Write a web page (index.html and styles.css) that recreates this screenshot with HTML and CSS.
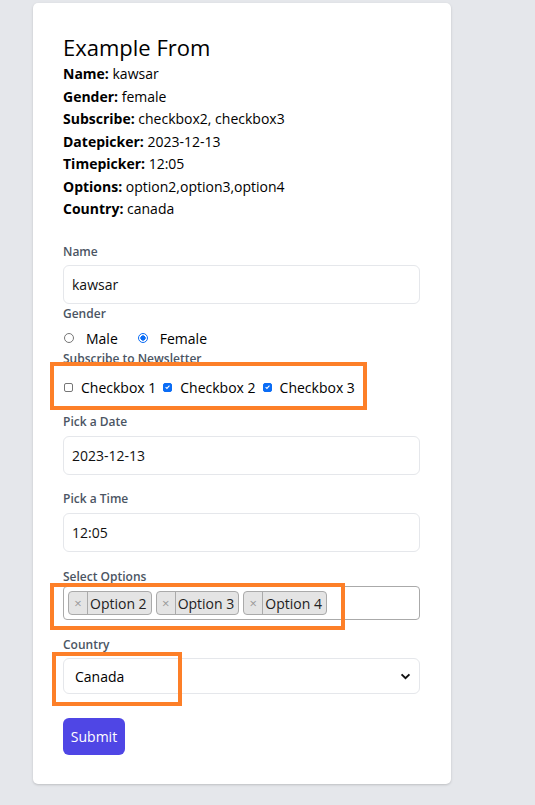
FILE: index.html
```html
<!DOCTYPE html>
<html lang="en">
<head>
<meta charset="utf-8">
<title>Example From</title>
<link rel="stylesheet" href="styles.css">
</head>
<body>
<div class="card">
  <h2 class="title">Example From</h2>
  <div class="summary">
    <p><strong>Name:</strong> kawsar</p>
    <p><strong>Gender:</strong> female</p>
    <p><strong>Subscribe:</strong> checkbox2, checkbox3</p>
    <p><strong>Datepicker:</strong> 2023-12-13</p>
    <p><strong>Timepicker:</strong> 12:05</p>
    <p><strong>Options:</strong> option2,option3,option4</p>
    <p><strong>Country:</strong> canada</p>
  </div>
  <form class="form">
    <label class="field-label lbl-name">Name</label>
    <input class="text-input in-name" type="text" value="kawsar">

    <label class="field-label lbl-gender">Gender</label>
    <div class="radio-row">
      <span class="radio"></span><span class="opt-text">Male</span>
      <span class="radio checked"></span><span class="opt-text">Female</span>
    </div>

    <label class="field-label lbl-sub">Subscribe to Newsletter</label>
    <div class="check-row">
      <span class="check"></span><span class="chk-text">Checkbox 1</span>
      <span class="check checked"><svg viewBox="0 0 10 10" width="10" height="10"><path d="M2.3 5.2 L4.2 7 L7.8 3" fill="none" stroke="#fff" stroke-width="1.5"/></svg></span><span class="chk-text">Checkbox 2</span>
      <span class="check checked"><svg viewBox="0 0 10 10" width="10" height="10"><path d="M2.3 5.2 L4.2 7 L7.8 3" fill="none" stroke="#fff" stroke-width="1.5"/></svg></span><span class="chk-text">Checkbox 3</span>
      <span class="mark mark-check"></span>
    </div>

    <label class="field-label lbl-date">Pick a Date</label>
    <input class="text-input in-date" type="text" value="2023-12-13">

    <label class="field-label lbl-time">Pick a Time</label>
    <input class="text-input in-time" type="text" value="12:05">

    <label class="field-label lbl-opts">Select Options</label>
    <div class="multi">
      <span class="tag"><span class="tag-x">×</span><span class="tag-text">Option 2</span></span>
      <span class="tag"><span class="tag-x">×</span><span class="tag-text">Option 3</span></span>
      <span class="tag"><span class="tag-x">×</span><span class="tag-text">Option 4</span></span>
      <span class="mark mark-multi"></span>
    </div>

    <label class="field-label lbl-country">Country</label>
    <div class="select">
      <span class="select-text">Canada</span>
      <svg class="chev" viewBox="0 0 12 8" width="11" height="7"><path d="M1.5 1.5 L6 6 L10.5 1.5" fill="none" stroke="#111" stroke-width="2.2"/></svg>
      <span class="mark mark-country"></span>
    </div>

    <button class="submit" type="button">Submit</button>
  </form>
</div>
</body>
</html>
```

FILE: styles.css
```css
html, body {
  margin: 0;
  padding: 0;
}
body {
  background: #e5e7eb;
  font-family: "Open Sans", "Noto Sans", "Liberation Sans", sans-serif;
  color: #111827;
  height: 805px;
  overflow: hidden;
}
.card {
  position: relative;
  box-sizing: border-box;
  margin: 3px 0 0 33px;
  width: 418px;
  background: #fff;
  border-radius: 5px;
  box-shadow: 0 1px 3px rgba(0,0,0,0.12), 0 1px 2px rgba(0,0,0,0.06);
  padding: 28px 31px 29px 30px;
}
.title {
  margin: 0;
  font-size: 22px;
  line-height: 32px;
  font-weight: 400;
  color: #000;
}
.summary p {
  margin: 0;
  font-size: 14px;
  line-height: 22.5px;
  color: #000;
}
.summary strong {
  font-weight: 700;
}
.form {
  display: flex;
  flex-direction: column;
  align-items: stretch;
  margin-top: 23.5px;
}
.field-label {
  display: block;
  font-size: 12px;
  line-height: 16px;
  font-weight: 600;
  color: #4b5563;
}
.text-input {
  box-sizing: border-box;
  height: 39px;
  width: 100%;
  border: 1px solid #e5e7eb;
  border-radius: 6px;
  padding: 0 8px;
  font-family: inherit;
  font-size: 14px;
  color: #111;
  background: #fff;
  outline: none;
}
.in-name { margin-top: 5px; }
.lbl-gender { margin-top: 2px; }
.radio-row {
  display: flex;
  align-items: center;
  height: 20px;
  margin-top: 6px;
  font-size: 14px;
  color: #000;
}
.radio {
  box-sizing: border-box;
  width: 10px;
  height: 10px;
  border: 1px solid #767676;
  border-radius: 50%;
  margin-left: 1px;
  margin-right: 12px;
}
.radio.checked {
  border: 1.5px solid #0a6cf5;
  background: radial-gradient(circle, #0a6cf5 0 2.4px, #fff 2.9px);
}
.opt-text { margin-right: 19px; }
.lbl-sub { margin-top: 3px; }
.check-row {
  position: relative;
  display: flex;
  align-items: center;
  height: 18px;
  margin-top: 11px;
  font-size: 14px;
  color: #000;
}
.check {
  box-sizing: border-box;
  width: 9px;
  height: 9px;
  border: 1px solid #767676;
  border-radius: 2px;
  margin-left: 1px;
  margin-right: 8px;
  display: flex;
  align-items: center;
  justify-content: center;
}
.check.checked {
  background: #0a6cf5;
  border-color: #0a6cf5;
}
.check svg { width: 8px; height: 8px; }
.chk-text { margin-right: 6px; }
.lbl-date { margin-top: 18px; }
.in-date { margin-top: 6px; }
.lbl-time { margin-top: 16px; }
.in-time { margin-top: 6px; }
.lbl-opts { margin-top: 17px; }
.multi {
  position: relative;
  box-sizing: border-box;
  height: 34px;
  margin-top: 1px;
  border: 1px solid #aaa;
  border-radius: 4px;
  display: flex;
  align-items: center;
  gap: 4px;
  padding-left: 4px;
}
.tag {
  box-sizing: border-box;
  display: flex;
  align-items: stretch;
  height: 24px;
  background: #e4e4e4;
  border: 1px solid #aaa;
  border-radius: 4px;
  font-size: 14px;
  color: #222;
}
.tag-x {
  width: 18px;
  display: flex;
  align-items: center;
  justify-content: center;
  border-right: 1px solid #aaa;
  color: #999;
  font-size: 13px;
}
.tag-text {
  display: flex;
  align-items: center;
  padding: 0 4px 0 2px;
}
.lbl-country { margin-top: 17px; }
.select {
  position: relative;
  box-sizing: border-box;
  height: 36px;
  margin-top: 5px;
  border: 1px solid #e5e7eb;
  border-radius: 6px;
  display: flex;
  align-items: center;
  justify-content: space-between;
  padding: 0 8px 0 11px;
  font-size: 14px;
  color: #000;
}
.submit {
  align-self: flex-start;
  margin-top: 24px;
  height: 37px;
  width: 62px;
  padding: 0;
  border: none;
  border-radius: 6px;
  background: #4f46e5;
  color: #fff;
  font-family: inherit;
  font-size: 14px;
  font-weight: 500;
}
.mark {
  position: absolute;
  box-sizing: border-box;
  border: 4.5px solid #fd7f28;
  pointer-events: none;
}
.mark-check {
  left: -13px;
  top: -16px;
  width: 317px;
  height: 48px;
}
.mark-multi {
  left: -14px;
  top: -4px;
  width: 295px;
  height: 47px;
}
.mark-country {
  left: -12px;
  top: -7px;
  width: 130px;
  height: 54px;
}
```
